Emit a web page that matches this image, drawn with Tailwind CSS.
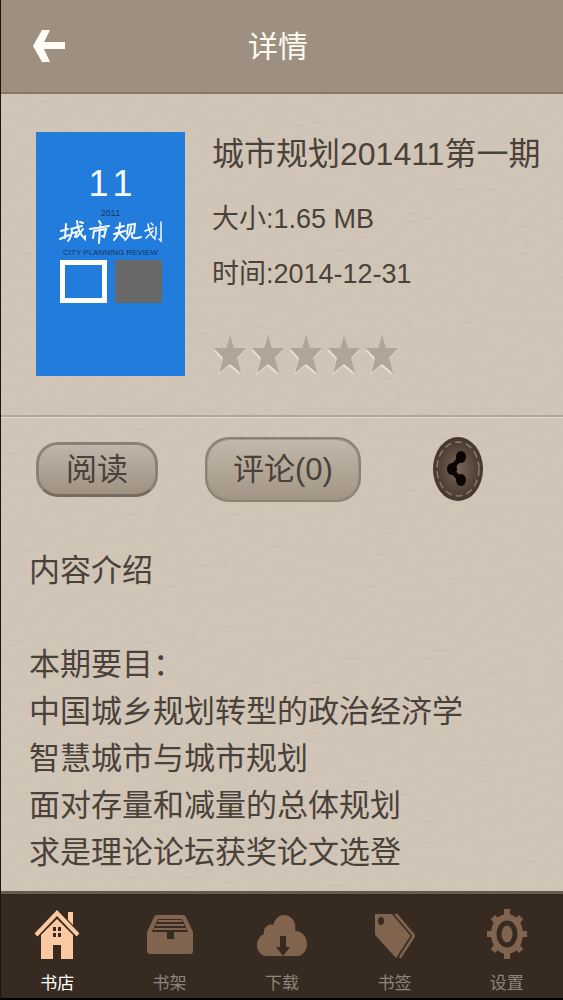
<!DOCTYPE html>
<html lang="zh-CN">

<head>
    <meta charset="UTF-8">
    <meta name="viewport" content="width=device-width, initial-scale=1.0">
    <title>详情</title>
    <script src="https://cdn.jsdelivr.net/npm/@tailwindcss/browser@4"></script>
</head>

<body class="min-h-screen flex flex-col border-l border-b-2 border-l-[#24150c] border-b-black bg-[#cfc3b5] font-['Liberation_Sans','Noto_Sans_CJK_SC',sans-serif] text-[#4a4139]">

    <header class="relative h-[94px] flex items-center justify-center bg-[#9d9081] border-b-2 border-[#85786b]">
        <a href="#" aria-label="返回" class="absolute left-8 top-[30px]">
            <svg class="w-8 h-8" viewBox="0 0 32 32" fill="#fffdf6">
                <path d="M0 16 9 0h8L11 12h21v7H11l6 13H9z" />
            </svg>
        </a>
        <h1 class="pr-2 text-[30px] text-[#fffaf0]">详情</h1>
    </header>

    <main class="relative flex-1">
        <!-- paper grain -->
        <svg class="absolute inset-0 w-full h-full opacity-10 pointer-events-none" aria-hidden="true">
            <filter id="paper" x="0" y="0" width="100%" height="100%">
                <feTurbulence type="fractalNoise" baseFrequency="0.06 0.14" numOctaves="3" seed="4" result="noise" />
                <feDiffuseLighting in="noise" lighting-color="#e0d4c6" surfaceScale="1" diffuseConstant="1.2">
                    <feDistantLight azimuth="60" elevation="58" />
                </feDiffuseLighting>
            </filter>
            <rect width="100%" height="100%" filter="url(#paper)" />
        </svg>

        <div class="relative">
            <section class="flex gap-[27px] pl-[35px] pt-[38px] pb-[37px] border-b-2 border-[#b3a79a] shadow-[0_1px_0_#e2d8cc]">
                <div class="w-[149px] h-[244px] shrink-0 flex flex-col items-center bg-[#227cdb]">
                    <p class="mt-8 flex gap-1 text-[36px] leading-[40px] text-[#f4faff]"><span>1</span><span>1</span></p>
                    <p class="pt-1 text-[9px] leading-[10px] text-[#14375f]">2011</p>
                    <svg class="w-[104px] h-[28px]" viewBox="0 0 104 28" fill="none" stroke="#f4faff" stroke-width="2" stroke-linecap="round" role="img" aria-label="城市规划">
                        <path d="M2 13 9 11M7 6 6 20M1 21 10 17M12 11 23 8M13 11Q13 18 9 23M14 15 18 14 16 19M18 3Q19 15 26 21L26 18M24 11 18 19M21 4 24 5" />
                        <path d="M40 3 42 6M31 11 50 8M35 13 34 20M35 13 47 11 45 19 43 18M41 8 40 25" />
                        <path d="M57 10 65 8M55 16 66 13M61 5Q61 16 55 22M61 16 65 20M69 7 68 16M69 7 76 6 75 15M72 9Q71 18 66 22M73 15Q71 23 82 19" />
                        <path d="M86 13 94 10M89 6Q90 16 96 21L96 18M94 13 87 20M92 5 94 7" stroke-width="1.5" />
                        <path d="M97 9V17M102 4V23L100 21" stroke-width="1.5" />
                    </svg>
                    <p class="text-[8px] leading-[14px] whitespace-nowrap text-[#123564]">CITY PLANNING REVIEW</p>
                    <div class="flex gap-2">
                        <div class="w-[47px] h-[43px] border-[5px] border-white"></div>
                        <div class="w-[47px] h-[43px] bg-[#686868]"></div>
                    </div>
                </div>
                <div class="flex flex-col">
                    <h2 class="text-[32px] leading-[44px] whitespace-nowrap">城市规划201411第一期</h2>
                    <p class="mt-4 text-[27px] leading-[55px]">大小:1.65 MB</p>
                    <p class="text-[27px] leading-[55px]">时间:2014-12-31</p>
                    <svg class="mt-8 w-[188px] h-[44px]" viewBox="0 0 188 44" role="img" aria-label="评分 0">
                        <defs>
                            <path id="star" d="M16 1 20 14H32L23 24 27 39 16 30 5 39 9 24 0 14H12z" />
                        </defs>
                        <g fill="#e8dfd4">
                            <use href="#star" x="1" y="2" />
                            <use href="#star" x="39" y="2" />
                            <use href="#star" x="77" y="2" />
                            <use href="#star" x="115" y="2" />
                            <use href="#star" x="153" y="2" />
                        </g>
                        <g fill="#b0a598">
                            <use href="#star" x="2" />
                            <use href="#star" x="40" />
                            <use href="#star" x="78" />
                            <use href="#star" x="116" />
                            <use href="#star" x="154" />
                        </g>
                    </svg>
                </div>
            </section>

            <div class="flex items-center pl-[35px] pt-5">
                <button type="button" class="w-[122px] h-[55px] rounded-[22px] border-3 border-[#8d8175] border-b-[#776b60] bg-linear-to-b from-[#bfb5a9] to-[#9f9283] text-[31px] leading-none">阅读</button>
                <button type="button" class="ml-[47px] w-[156px] h-[65px] rounded-[24px] border-3 border-[#8d8175] bg-linear-to-b from-[#c2b8ac] to-[#a39685] text-[31px] leading-none outline-1 outline-dotted -outline-offset-3 outline-[#b5aa9d]">评论(0)</button>
                <button type="button" aria-label="分享" class="ml-[71px]">
                    <svg class="w-[52px] h-[65px]" viewBox="0 0 52 65">
                        <defs>
                            <radialGradient id="leather">
                                <stop offset="0" stop-color="#766559" />
                                <stop offset="1" stop-color="#45372e" />
                            </radialGradient>
                        </defs>
                        <ellipse cx="26" cy="32" rx="25" ry="32" fill="url(#leather)" />
                        <ellipse cx="26" cy="32" rx="21" ry="27" fill="none" stroke="#8d7c6d" stroke-width="1.5" stroke-dasharray="7 4" />
                        <path d="M29 20 19 32 29 44" fill="none" stroke="#080504" stroke-width="5" />
                        <g fill="#080504">
                            <ellipse cx="29" cy="20" rx="5" ry="6" />
                            <ellipse cx="20" cy="32" rx="5" ry="6" />
                            <ellipse cx="29" cy="43" rx="5" ry="6" />
                        </g>
                    </svg>
                </button>
            </div>

            <section class="px-7 pt-[45px] text-[31px] leading-[47px]">
                <h3>内容介绍</h3>
                <p class="mt-[47px]">本期要目：</p>
                <p>中国城乡规划转型的政治经济学</p>
                <p>智慧城市与城市规划</p>
                <p>面对存量和减量的总体规划</p>
                <p>求是理论论坛获奖论文选登</p>
            </section>
        </div>
    </main>

    <nav class="h-[107px] grid grid-cols-5 pt-3 border-t-3 border-[#685b50] bg-[#372a21] text-[17px] leading-[28px] text-[#8d847c]">
        <a href="#" class="flex flex-col items-center gap-2 text-white">
            <svg class="w-[48px] h-[56px]" viewBox="0 0 48 56" fill="#fbcaa3">
                <path d="M35 6h5v14l-5-6z" />
                <path d="M24 9 40 27v26H28V39h-8v14H8V27z" />
                <path d="M3 29 24 8 45 29" fill="none" stroke="#372a21" stroke-width="7" />
                <path d="M3 29 24 7 45 29" fill="none" stroke="#fbcaa3" stroke-width="4" />
                <path d="M20 21h3v4h-3zM25 21h3v4h-3zM20 27h3v4h-3zM25 27h3v4h-3z" fill="#372a21" />
            </svg>
            <span>书店</span>
        </a>
        <a href="#" class="flex flex-col items-center gap-2">
            <svg class="w-[48px] h-[56px]" viewBox="0 0 48 56">
                <path d="M11 9h26q2 0 3 2l7 15v19q0 3-3 3H4q-3 0-3-3V26L8 11q1-2 3-2z" fill="#80644e" />
                <path d="M12 13h24l6 13H6z" fill="#372a21" />
                <path d="M12 15h24M10 19h28M8 23h32" stroke="#80644e" stroke-width="2" />
                <path d="M21 25h7v8h-7z" fill="#372a21" />
            </svg>
            <span>书架</span>
        </a>
        <a href="#" class="flex flex-col items-center gap-2">
            <svg class="w-[52px] h-[56px]" viewBox="0 0 52 56">
                <path d="M11 50C5 50 1 45 1 39c0-5 3-9 7-11-1-6 4-11 9-9 2-6 6-10 11-10 8 0 13 8 11 16 7 0 12 6 12 13 0 6-4 12-10 12z" fill="#80644e" />
                <path d="M24 30h6v11h4l-7 9-7-9h4z" fill="#372a21" />
            </svg>
            <span>下载</span>
        </a>
        <a href="#" class="flex flex-col items-center gap-2">
            <svg class="w-[44px] h-[56px]" viewBox="0 0 44 56">
                <path d="M3 8h19q1 0 2 1l16 19q2 2 0 4L28 50q-1 2-4 2L4 30q-1-1-1-2z" fill="#80644e" />
                <path d="M24 8 41 28q2 2 0 4L28 52" fill="none" stroke="#80644e" stroke-width="2" />
                <path d="M20 7 38 28q2 2 0 4L25 52" fill="none" stroke="#372a21" stroke-width="1.5" />
                <ellipse cx="9" cy="15" rx="3" ry="4" fill="#372a21" />
            </svg>
            <span>书签</span>
        </a>
        <a href="#" class="flex flex-col items-center gap-2">
            <svg class="w-[40px] h-[56px]" viewBox="0 0 40 56">
                <path d="M20 3v50M0 28h40M6 11l28 34M34 11 6 45" fill="none" stroke="#80644e" stroke-width="6" />
                <ellipse cx="20" cy="28" rx="16" ry="20" fill="#80644e" />
                <ellipse cx="20" cy="28" rx="8" ry="11" fill="none" stroke="#372a21" stroke-width="5" />
            </svg>
            <span>设置</span>
        </a>
    </nav>

</body>

</html>
